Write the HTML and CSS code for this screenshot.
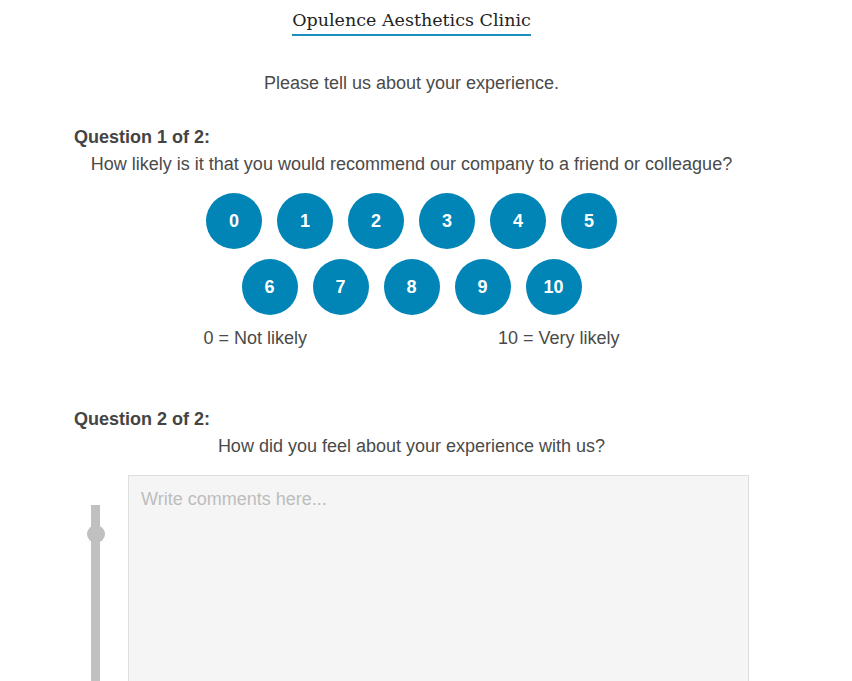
FILE: index.html
```html
<!DOCTYPE html>
<html>
<head>
<meta charset="utf-8">
<link rel="stylesheet" href="styles.css">
</head>
<body>
<div class="page">
  <div class="header"><span class="title">Opulence Aesthetics Clinic</span></div>
  <p class="intro">Please tell us about your experience.</p>

  <div class="question q1">
    <div class="q-label">Question 1 of 2:</div>
    <div class="q-text">How likely is it that you would recommend our company to a friend or colleague?</div>
    <div class="scale">
      <div class="scale-row">
        <button class="dot">0</button><button class="dot">1</button><button class="dot">2</button><button class="dot">3</button><button class="dot">4</button><button class="dot">5</button>
      </div>
      <div class="scale-row">
        <button class="dot">6</button><button class="dot">7</button><button class="dot">8</button><button class="dot">9</button><button class="dot">10</button>
      </div>
      <div class="scale-labels"><span>0 = Not likely</span><span>10 = Very likely</span></div>
    </div>
  </div>

  <div class="question q2">
    <div class="q-label">Question 2 of 2:</div>
    <div class="q-text">How did you feel about your experience with us?</div>
    <div class="comment-row">
      <div class="slider"><span class="thumb"></span></div>
      <textarea class="comments" placeholder="Write comments here..."></textarea>
    </div>
  </div>
</div>
</body>
</html>
```
FILE: styles.css
```css
html, body {
  margin: 0;
  padding: 0;
  background: #ffffff;
  overflow: hidden;
}
body {
  font-family: "Liberation Sans", Arial, sans-serif;
  color: #4a4a4a;
}
.page {
  width: 675px;
  margin-left: 74px;
}
.header {
  padding-top: 9px;
  text-align: center;
}
.title {
  display: inline-block;
  font-family: "DejaVu Serif", "Liberation Serif", serif;
  font-size: 17.5px;
  line-height: 23px;
  color: #222222;
  padding-bottom: 2px;
  border-bottom: 2px solid #1a8fc2;
}
.intro {
  margin: 36px 0 0;
  text-align: center;
  font-size: 18px;
  line-height: 22px;
}
.question {
  font-size: 18px;
  line-height: 22px;
}
.q1 { margin-top: 32px; }
.q2 { margin-top: 59px; }
.q-label {
  font-weight: bold;
  color: #444444;
}
.q-text {
  margin-top: 5px;
  text-align: center;
}
.scale {
  margin-top: 18px;
  display: flex;
  flex-direction: column;
  align-items: center;
  gap: 10px;
}
.scale-row {
  display: flex;
  gap: 15px;
}
.dot {
  width: 56px;
  height: 56px;
  border-radius: 50%;
  border: none;
  padding: 0;
  background: #0085b6;
  color: #ffffff;
  font-family: "Liberation Sans", Arial, sans-serif;
  font-weight: bold;
  font-size: 18px;
}
.scale-labels {
  margin-top: 2px;
  width: 416px;
  display: flex;
  justify-content: space-between;
  font-size: 18px;
  line-height: 22px;
}
.comment-row {
  margin-top: 18px;
  display: flex;
  align-items: flex-start;
  padding-left: 17px;
}
.slider {
  position: relative;
  margin-top: 30px;
  width: 9px;
  height: 180px;
  background: #c0c0c0;
}
.thumb {
  position: absolute;
  left: -4.5px;
  top: 20px;
  width: 18px;
  height: 18px;
  border-radius: 50%;
  background: #c0c0c0;
}
.comments {
  margin-left: 28px;
  width: 622px;
  height: 210px;
  box-sizing: border-box;
  background: #f5f5f5;
  border: 1px solid #dedede;
  border-radius: 0;
  padding: 12px 12px;
  font-family: "Liberation Sans", Arial, sans-serif;
  font-size: 18px;
  line-height: 22px;
  color: #444;
  resize: none;
}
.comments::placeholder {
  color: #bdbdbd;
}
```
